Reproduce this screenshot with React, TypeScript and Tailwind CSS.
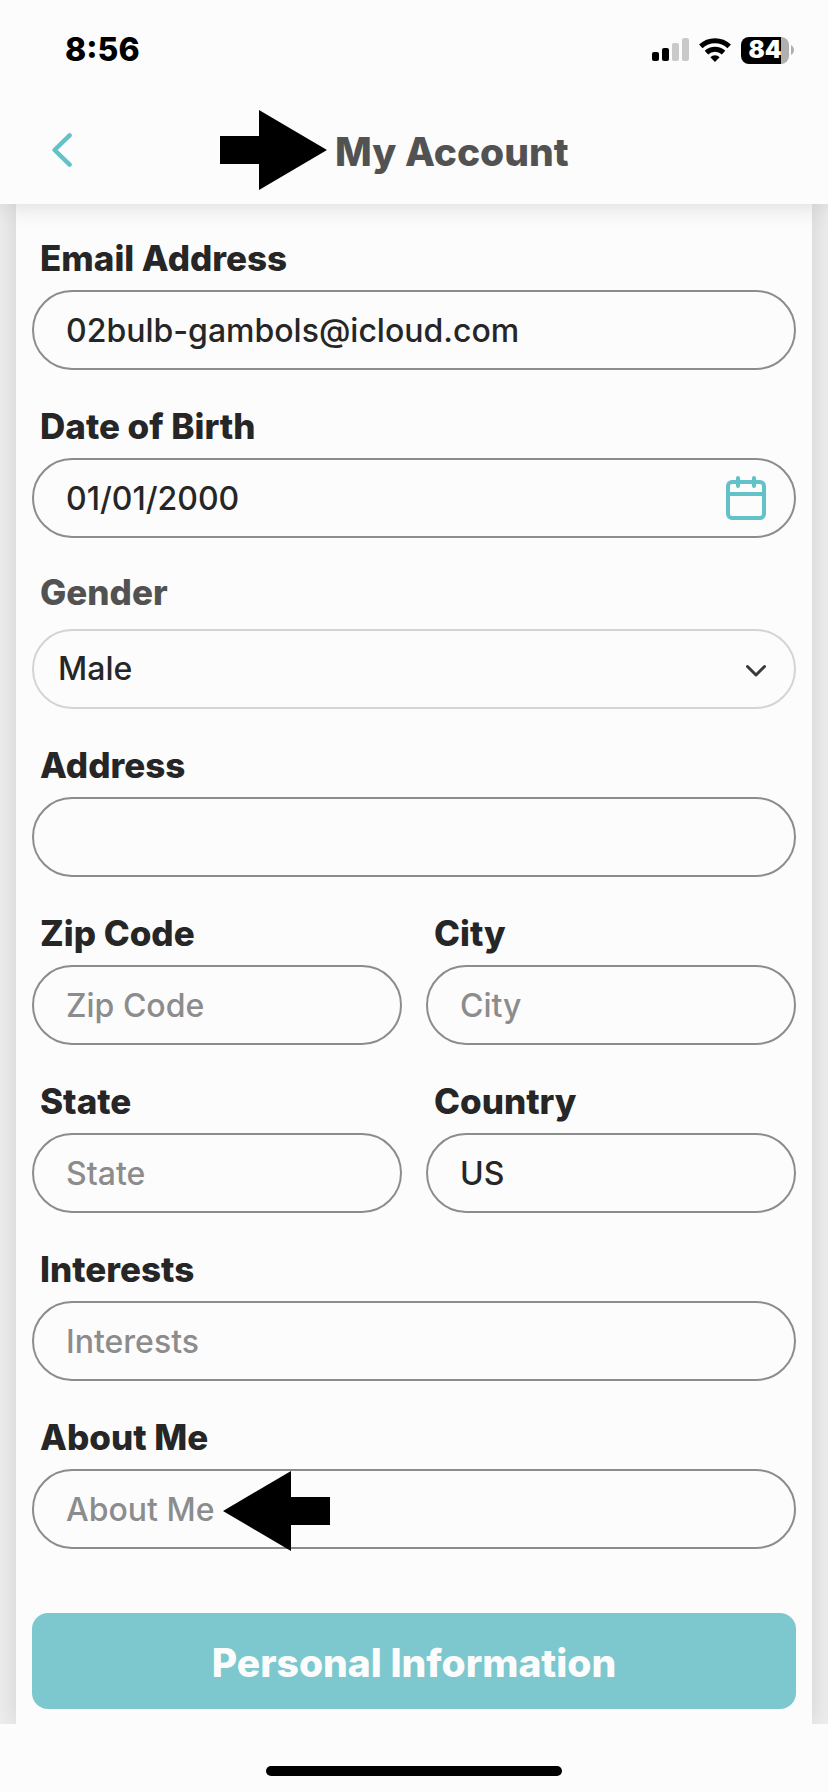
import { useState } from "react";
import clsx from "clsx";

interface FieldProps {
  id: string;
  label: string;
  type?: string;
  value?: string;
  placeholder?: string;
  children?: React.ReactNode;
}

function Field({ id, label, type = "text", value = "", placeholder, children }: FieldProps) {
  const [text, setText] = useState(value);

  return (
    <div className="flex min-w-0 flex-col gap-3">
      <label htmlFor={id} className="pl-2 text-[35px] leading-10 font-extrabold text-[#262626]">
        {label}
      </label>
      <div className="relative">
        <input
          id={id}
          type={type}
          value={text}
          placeholder={placeholder}
          onChange={(e) => setText(e.target.value)}
          className="block h-20 w-full rounded-full border-2 border-[#8c8c8c] bg-transparent px-8 text-[32px] font-medium text-[#262626] outline-none placeholder:text-[#8c8c8c]"
        />
        {children}
      </div>
    </div>
  );
}

function GenderField() {
  const [gender, setGender] = useState("Male");

  return (
    <div className="flex flex-col gap-[19px]">
      <label htmlFor="gender" className="pl-2 text-[35px] leading-9 font-extrabold text-[#525252]">
        Gender
      </label>
      <div className="relative">
        <select
          id="gender"
          value={gender}
          onChange={(e) => setGender(e.target.value)}
          className="block h-20 w-full appearance-none rounded-full border-2 border-[#d4d4d4] bg-transparent px-6 text-[32px] font-medium text-[#262626] outline-none"
        >
          <option>Male</option>
          <option>Female</option>
          <option>Other</option>
        </select>
        <svg
          viewBox="0 0 20 16"
          className="pointer-events-none absolute top-8 right-[30px] h-4 w-5"
          fill="none"
          stroke="#3a3a3a"
          strokeWidth="3"
          strokeLinecap="round"
          strokeLinejoin="round"
        >
          <path d="M1.5 5.5 10 14 18.5 5.5" />
        </svg>
      </div>
    </div>
  );
}

function Arrow({ className }: { className?: string }) {
  return (
    <svg viewBox="0 0 107 80" className={clsx("h-20 w-[107px]", className)} aria-hidden="true">
      <path d="M0 26H39V0L107 40 39 80V54H0Z" fill="#000" />
    </svg>
  );
}

function StatusBar() {
  return (
    <div className="flex h-[100px] items-center justify-between pr-[34px] pl-[65px]">
      <span className="text-[32px] leading-10 font-extrabold text-black">8:56</span>
      <div className="flex items-center gap-[10px]">
        <svg viewBox="0 0 37 24" className="h-6 w-[37px]">
          <rect x="0" y="14" width="7" height="9" rx="2" />
          <rect x="10" y="10" width="7" height="13" rx="2" />
          <rect x="20" y="5" width="7" height="18" rx="2" fill="#c9c9c9" />
          <rect x="30" y="0" width="7" height="23" rx="2" fill="#c9c9c9" />
        </svg>
        <svg viewBox="0 0 32 24" className="h-6 w-8" fill="none" stroke="#000" strokeWidth="5">
          <path d="M1.8 8.4A20.4 20.4 0 0 1 30.2 8.4" />
          <path d="M7.4 14.6A12.6 12.6 0 0 1 24.6 14.6" />
          <path d="M11.4 19.3A6.4 6.4 0 0 1 20.6 19.3L16 24Z" fill="#000" stroke="none" />
        </svg>
        <div className="flex items-center gap-[2px]">
          <div className="flex h-[27px] w-12 items-center justify-center rounded-lg bg-linear-to-r from-black from-83% to-[#b0b0b0] to-83% text-2xl leading-none font-black text-white">
            84
          </div>
          <svg viewBox="0 0 3 10" className="h-[10px] w-[3px]">
            <path d="M0 0C4 2 4 8 0 10Z" fill="#b0b0b0" />
          </svg>
        </div>
      </div>
    </div>
  );
}

export default function App() {
  return (
    <div className="flex min-h-screen flex-col bg-[#fcfcfc] font-['Inter',sans-serif]">
      <header className="relative z-10 bg-[#fcfcfc] pb-1 shadow-[0_0_24px_rgba(0,0,0,0.16)]">
        <StatusBar />
        <div className="flex h-[100px] items-center pl-12">
          <button type="button" aria-label="Back" className="flex h-12 w-7 items-center justify-center">
            <svg
              viewBox="0 0 20 34"
              className="h-[34px] w-5"
              fill="none"
              stroke="#63c1c8"
              strokeWidth="4.4"
              strokeLinecap="round"
              strokeLinejoin="round"
            >
              <path d="M17.6 2.4 2.6 17 17.6 31.6" />
            </svg>
          </button>
          <div className="ml-36 flex items-center gap-2">
            <Arrow />
            <h1 className="pt-[2px] text-[39px] leading-none font-extrabold text-[#525252]">My Account</h1>
          </div>
        </div>
      </header>

      <main className="grow overflow-hidden bg-[#ededed] px-4">
        <form
          onSubmit={(e) => e.preventDefault()}
          className="flex h-full flex-col gap-9 bg-[#fcfcfc] px-4 pt-[34px] pb-[15px] shadow-[0_0_24px_rgba(0,0,0,0.12)]"
        >
          <Field id="email" label="Email Address" type="email" value="02bulb-gambols@icloud.com" />
          <Field id="birth" label="Date of Birth" value="01/01/2000">
            <button type="button" aria-label="Pick a date" className="absolute inset-y-0 right-[30px]">
              <svg viewBox="0 0 40 44" className="h-11 w-10" fill="none" stroke="#63c1c8" strokeWidth="4">
                <rect x="2" y="6" width="36" height="36" rx="4" />
                <path d="M2 18H38" />
                <path d="M12 2V10M28 2V10" strokeLinecap="round" />
              </svg>
            </button>
          </Field>
          <GenderField />
          <Field id="address" label="Address" />
          <div className="grid grid-cols-2 gap-x-6 gap-y-9">
            <Field id="zip" label="Zip Code" placeholder="Zip Code" />
            <Field id="city" label="City" placeholder="City" />
            <Field id="state" label="State" placeholder="State" />
            <Field id="country" label="Country" value="US" />
          </div>
          <Field id="interests" label="Interests" placeholder="Interests" />
          <Field id="about" label="About Me" placeholder="About Me">
            <Arrow className="pointer-events-none absolute top-[2px] left-[191px] rotate-180" />
          </Field>
          <button
            type="submit"
            className="mt-7 h-24 w-full rounded-2xl bg-[#7cc8ce] pt-[2px] text-[39px] leading-none font-extrabold text-[#fcfcfc]"
          >
            Personal Information
          </button>
        </form>
      </main>

      <footer className="flex justify-center pt-[42px] pb-4">
        <div className="h-[10px] w-[296px] rounded-full bg-black" />
      </footer>
    </div>
  );
}
